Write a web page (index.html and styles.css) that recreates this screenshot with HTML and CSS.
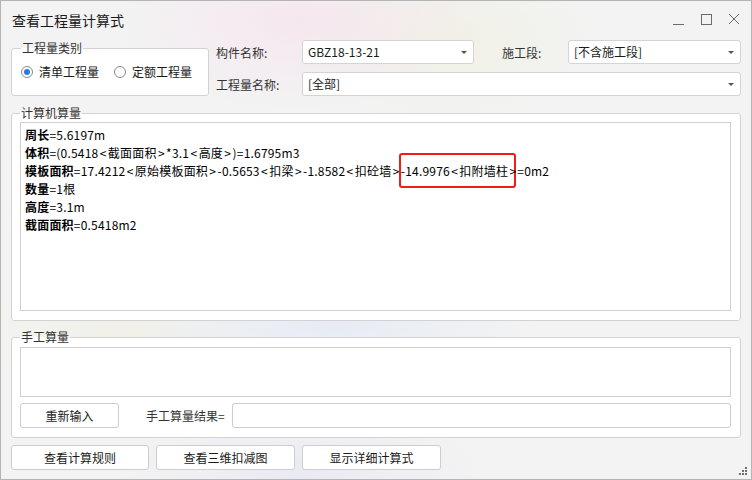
FILE: index.html
```html
<!DOCTYPE html>
<html lang="zh-CN">
<head>
    <meta charset="UTF-8">
    <title>查看工程量计算式</title>
    <link rel="stylesheet" href="styles.css">
</head>
<body>
    <div class="window">
        <div class="title-bar">
            <span class="title">查看工程量计算式</span>
            <div class="win-controls">
                <svg width="28" height="20" viewBox="0 0 28 20"><path d="M9 14.5h11" stroke="#6b6b6b" stroke-width="1"/></svg>
                <svg width="28" height="20" viewBox="0 0 28 20"><rect x="9.5" y="4.5" width="10" height="10" fill="none" stroke="#6b6b6b" stroke-width="1"/></svg>
                <svg width="28" height="20" viewBox="0 0 28 20"><path d="M9 4l10 10M19 4L9 14" stroke="#6b6b6b" stroke-width="1"/></svg>
            </div>
        </div>

        <div class="content">
            <div class="top-row">
                <fieldset class="group type-group">
                    <legend>工程量类别</legend>
                    <div class="radios">
                        <label class="radio"><span class="radio-dot checked"></span>清单工程量</label>
                        <label class="radio"><span class="radio-dot"></span>定额工程量</label>
                    </div>
                </fieldset>

                <div class="form-grid">
                    <span class="field-label">构件名称:</span>
                    <div class="combo">GBZ18-13-21<span class="arrow"></span></div>
                    <span class="field-label stage-label">施工段:</span>
                    <div class="combo">[不含施工段]<span class="arrow"></span></div>
                    <span class="field-label">工程量名称:</span>
                    <div class="combo wide">[全部]<span class="arrow"></span></div>
                </div>
            </div>

            <fieldset class="group calc-group">
                <legend>计算机算量</legend>
                <div class="text-box formula">
                    <div><b>周长</b>=5.6197m</div>
                    <div><b>体积</b>=(0.5418<i>&lt;</i>截面面积<i>&gt;</i>*3.1<i>&lt;</i>高度<i>&gt;</i>)=1.6795m3</div>
                    <div><b>模板面积</b>=17.4212<i>&lt;</i>原始模板面积<i>&gt;</i>-0.5653<i>&lt;</i>扣梁<i>&gt;</i>-1.8582<i>&lt;</i>扣砼墙<i>&gt;</i><span class="mark">-14.9976<i>&lt;</i>扣附墙柱<i class="last">&gt;</i></span>=0m2</div>
                    <div><b>数量</b>=1根</div>
                    <div><b>高度</b>=3.1m</div>
                    <div><b>截面面积</b>=0.5418m2</div>
                </div>
            </fieldset>

            <fieldset class="group manual-group">
                <legend>手工算量</legend>
                <div class="text-box manual-box"></div>
                <div class="manual-row">
                    <button class="btn reset-btn">重新输入</button>
                    <span class="result-label">手工算量结果=</span>
                    <div class="result-input"></div>
                </div>
            </fieldset>

            <div class="bottom-buttons">
                <button class="btn">查看计算规则</button>
                <button class="btn">查看三维扣减图</button>
                <button class="btn">显示详细计算式</button>
            </div>
        </div>

        <svg class="grip" width="9" height="9" viewBox="0 0 9 9">
            <rect x="6" y="0" width="2" height="2" fill="#6e6e6e"/>
            <rect x="3" y="3" width="2" height="2" fill="#6e6e6e"/>
            <rect x="6" y="3" width="2" height="2" fill="#6e6e6e"/>
            <rect x="0" y="6" width="2" height="2" fill="#6e6e6e"/>
            <rect x="3" y="6" width="2" height="2" fill="#6e6e6e"/>
            <rect x="6" y="6" width="2" height="2" fill="#6e6e6e"/>
        </svg>
    </div>
</body>
</html>
```

FILE: styles.css
```css
* {
    margin: 0;
    padding: 0;
    box-sizing: border-box;
    font-family: "Noto Sans CJK SC", "Liberation Sans", sans-serif;
}

body {
    width: 752px;
    height: 480px;
    overflow: hidden;
    background: #f3f3f3;
}

.window {
    position: relative;
    width: 752px;
    height: 480px;
    border: 1px solid #b4b4b4;
    color: #1f1f1f;
    font-size: 12px;
    background:
        radial-gradient(ellipse 180px 90px at 300px 20px, rgba(246, 228, 238, 0.8), transparent),
        radial-gradient(ellipse 160px 80px at 440px 40px, rgba(240, 240, 225, 0.8), transparent),
        radial-gradient(ellipse 200px 60px at 330px 320px, rgba(228, 234, 246, 0.9), transparent),
        radial-gradient(ellipse 160px 60px at 120px 330px, rgba(240, 240, 230, 0.8), transparent),
        radial-gradient(ellipse 180px 60px at 300px 470px, rgba(232, 232, 244, 0.9), transparent),
        #f3f3f3;
}

/* 标题栏 */
.title-bar {
    height: 36px;
    display: flex;
    align-items: center;
    justify-content: space-between;
    padding-left: 11px;
}

.title {
    font-size: 14px;
    color: #1a1a1a;
    padding-top: 2px;
}

.win-controls {
    display: flex;
    padding-right: 3px;
    padding-top: 1px;
}

.content {
    padding: 3px 10px 0 10px;
}

/* 分组框 */
.group {
    border: 1px solid #d2d2d2;
    border-radius: 3px;
    background: #fff;
}

.group legend {
    padding: 0 1px;
    line-height: 16px;
    font-size: 12px;
    color: #333;
}

.top-row {
    display: flex;
    gap: 7px;
}

.type-group {
    width: 198px;
    height: 56px;
    padding: 8px 8px 0 9px;
}

.radios {
    display: flex;
    gap: 15px;
}

.radio {
    display: flex;
    align-items: center;
    gap: 6px;
    line-height: 16px;
    font-size: 12px;
    color: #1a1a1a;
}

.radio-dot {
    width: 12px;
    height: 12px;
    border: 1px solid #8a8a8a;
    border-radius: 50%;
    display: flex;
    align-items: center;
    justify-content: center;
    background: #fff;
}

.radio-dot.checked::after {
    content: "";
    width: 6px;
    height: 6px;
    border-radius: 50%;
    background: #2a7ae2;
}

.form-grid {
    display: grid;
    grid-template-columns: 86px 172px 94px 173px;
    grid-auto-rows: 24px;
    row-gap: 8px;
    align-items: center;
}

.field-label {
    color: #333;
}

.stage-label {
    padding-left: 28px;
}

.combo {
    position: relative;
    height: 24px;
    line-height: 22px;
    border: 1px solid #d4d4d4;
    border-radius: 3px;
    background: #fff;
    padding-left: 5px;
    color: #1a1a1a;
}

.combo.wide {
    grid-column: 2 / 5;
}

.arrow {
    position: absolute;
    right: 6px;
    top: 10px;
    border-left: 3px solid transparent;
    border-right: 3px solid transparent;
    border-top: 3px solid #555;
}

.text-box {
    border: 1px solid #cfcfcf;
    background: #fff;
}

.calc-group {
    margin-top: 9px;
    height: 216px;
    padding: 1px 9px 9px 8px;
}

.formula {
    height: 189px;
    padding: 3px 4px;
    line-height: 18px;
    color: #000;
    letter-spacing: 0.2px;
}

.formula b {
    font-weight: bold;
}

/* 尖括号两侧留白 */
.formula i {
    font-style: normal;
    margin: 0 1.3px;
}

.mark {
    border: 2px solid #f01e14;
    border-radius: 3px;
    padding: 7px 0;
    margin: 0 1px 0 -2px;
}

.mark .last {
    margin-right: -2px;
}

.manual-group {
    margin-top: 8px;
    padding: 2px 9px 9px 8px;
}

.manual-box {
    height: 50px;
}

.manual-row {
    display: flex;
    align-items: center;
    margin-top: 6px;
}

.btn {
    height: 25px;
    background: #fff;
    border: 1px solid #cdcdcd;
    border-radius: 3px;
    font-size: 12px;
    color: #1a1a1a;
}

.reset-btn {
    width: 99px;
}

.result-label {
    margin-left: 27px;
    width: 86px;
    color: #333;
}

.result-input {
    flex: 1;
    height: 25px;
    border: 1px solid #cdcdcd;
    border-radius: 3px;
    background: #fff;
}

.bottom-buttons {
    display: flex;
    gap: 7px;
    margin-top: 7px;
}

.bottom-buttons .btn:first-child {
    width: 138px;
}

.bottom-buttons .btn {
    width: 139px;
}

.grip {
    position: absolute;
    right: 3px;
    bottom: 3px;
}
```
